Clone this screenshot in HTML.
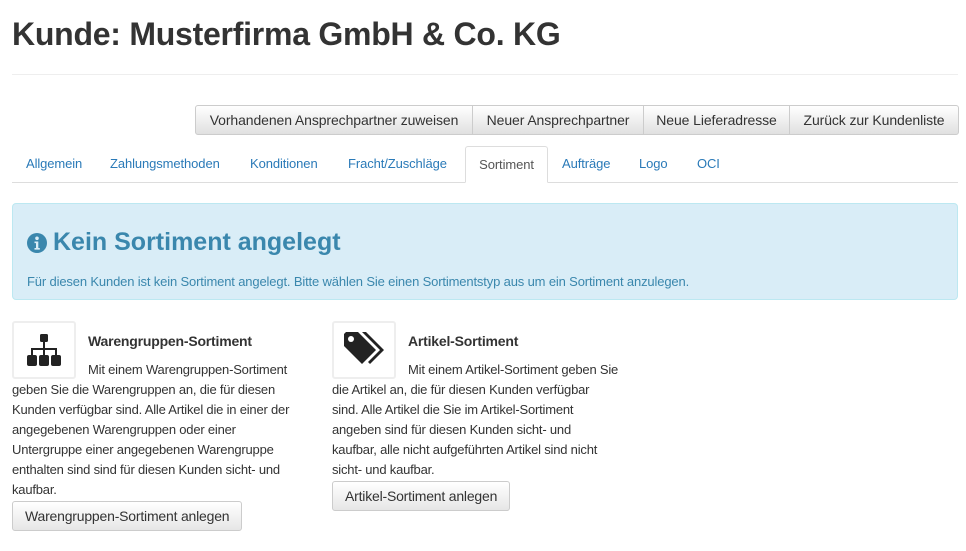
<!DOCTYPE html>
<html><head><meta charset="utf-8"><style>
body{margin:0;background:#fff;font-family:"Liberation Sans",Arial,sans-serif;color:#333;width:966px;height:551px;overflow:hidden;position:relative}
h1{position:absolute;left:12px;top:16px;margin:0;font-size:32px;font-weight:bold;color:#333;letter-spacing:-0.25px}
.hr{position:absolute;left:12px;top:74px;width:946px;border-top:1px solid #eee}
.btns{position:absolute;top:105px;left:195px;display:flex}
.btn{box-sizing:border-box;height:30px;border:1px solid #ccc;background:linear-gradient(#fff,#e0e0e0);font-size:14px;color:#333;display:flex;align-items:center;justify-content:center;margin-left:-1px;letter-spacing:-0.1px}
.tabs{position:absolute;top:146px;left:12px;width:946px;height:36px;border-bottom:1px solid #ddd}
.tab{position:absolute;top:0;height:36px;line-height:35px;font-size:13px;color:#2a7ab8;letter-spacing:-0.1px}
.tab.act{border:1px solid #ddd;border-bottom:1px solid #fff;background:#fff;color:#555;box-sizing:border-box;height:37px;text-align:center;border-radius:3px 3px 0 0}
.alert{position:absolute;left:12px;top:203px;width:946px;height:97px;box-sizing:border-box;background:#d9edf7;border:1px solid #bce8f1;border-radius:4px;color:#3a87ad}
.alert h2{margin:0;position:absolute;left:14px;top:24px;font-size:25px;font-weight:bold;color:#3a87ad;display:flex;align-items:center}
.alert p{margin:0;position:absolute;left:14px;top:70px;font-size:13px;letter-spacing:-0.15px}
.card{position:absolute;top:321px;font-size:13px;line-height:20px;color:#333;letter-spacing:-0.2px}
.thumb{float:left;width:60px;height:54px;border:2px solid #eee;border-radius:3px;margin-right:12px;display:flex;align-items:center;justify-content:center}
.card h4{margin:0;font-size:14px;font-weight:bold;padding-top:10px;line-height:20px;margin-bottom:9px}
.b2{display:inline-block;box-sizing:border-box;height:30px;border:1px solid #ccc;border-radius:3px;background:linear-gradient(#fff,#e6e6e6);font-size:14px;line-height:28px;padding:0 12px;margin-top:1px}
</style></head><body>
<h1>Kunde: Musterfirma GmbH &amp; Co. KG</h1>
<div class="hr"></div>
<div class="btns">
<div class="btn" style="width:278px;margin-left:0;border-radius:3px 0 0 3px">Vorhandenen Ansprechpartner zuweisen</div>
<div class="btn" style="width:172px">Neuer Ansprechpartner</div>
<div class="btn" style="width:147px">Neue Lieferadresse</div>
<div class="btn" style="width:170px;border-radius:0 3px 3px 0">Zurück zur Kundenliste</div>
</div>
<div class="tabs">
<div class="tab" style="left:14px">Allgemein</div>
<div class="tab" style="left:98px">Zahlungsmethoden</div>
<div class="tab" style="left:238px">Konditionen</div>
<div class="tab" style="left:336px">Fracht/Zuschläge</div>
<div class="tab act" style="left:453px;width:83px">Sortiment</div>
<div class="tab" style="left:550px">Aufträge</div>
<div class="tab" style="left:627px">Logo</div>
<div class="tab" style="left:685px">OCI</div>
</div>
<div class="alert">
<h2><svg width="20" height="20" viewBox="0 0 20 20" style="margin-right:6px"><circle cx="10" cy="10" r="10" fill="#3a87ad"/><circle cx="10" cy="5.3" r="1.8" fill="#d9edf7"/><path d="M7.5 8.5h3.8v6.5h1.5v1.6H7.5V15h1.5v-4.9H7.5z" fill="#d9edf7"/></svg>Kein Sortiment angelegt</h2>
<p>Für diesen Kunden ist kein Sortiment angelegt. Bitte wählen Sie einen Sortimentstyp aus um ein Sortiment anzulegen.</p>
</div>
<div class="card" style="left:12px;width:292px">
<div class="thumb"><svg width="36" height="36" viewBox="0 0 36 36" fill="#222"><rect x="14" y="2" width="8" height="8" rx="1.5"/><rect x="17" y="9" width="2" height="8"/><rect x="5" y="16" width="26" height="2"/><rect x="5" y="16" width="2" height="8"/><rect x="29" y="16" width="2" height="8"/><rect x="17" y="16" width="2" height="8"/><rect x="1" y="23" width="10" height="11" rx="2"/><rect x="13" y="23" width="10" height="11" rx="2"/><rect x="25" y="23" width="10" height="11" rx="2"/></svg></div>
<h4>Warengruppen-Sortiment</h4>
Mit einem Warengruppen-Sortiment geben Sie die Warengruppen an, die für diesen Kunden verfügbar sind. Alle Artikel die in einer der angegebenen Warengruppen oder einer Untergruppe einer angegebenen Warengruppe enthalten sind sind für diesen Kunden sicht- und kaufbar.<br>
<span class="b2">Warengruppen-Sortiment anlegen</span>
</div>
<div class="card" style="left:332px;width:320px;white-space:nowrap">
<div class="thumb"><svg width="44" height="40" viewBox="0 0 44 40"><path d="M2 4v12l18 18 14-14L16 2H4z" fill="#222"/><circle cx="9" cy="9" r="3" fill="#fff"/><path d="M20 2h4l18 18-14 14-2-2 12-12z" fill="#222"/></svg></div>
<h4>Artikel-Sortiment</h4>
Mit einem Artikel-Sortiment geben Sie<br>die Artikel an, die für diesen Kunden verfügbar<br>sind. Alle Artikel die Sie im Artikel-Sortiment<br>angeben sind für diesen Kunden sicht- und<br>kaufbar, alle nicht aufgeführten Artikel sind nicht<br>sicht- und kaufbar.<br>
<span class="b2">Artikel-Sortiment anlegen</span>
</div>
</body></html>
